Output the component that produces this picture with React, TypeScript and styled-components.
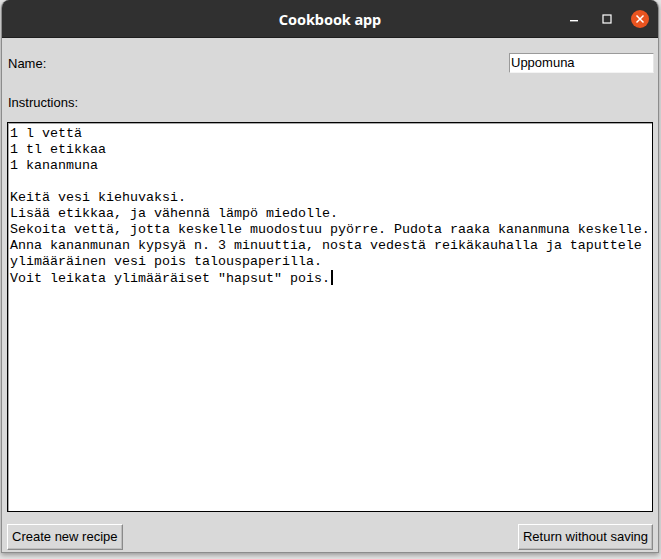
import React from "react";
import styled, { createGlobalStyle } from "styled-components";

const GlobalStyle = createGlobalStyle`
  html, body { margin: 0; padding: 0; }
  body {
    background: #e4e4e4;
    width: 661px;
    height: 559px;
    overflow: hidden;
  }
  * { box-sizing: border-box; }
`;

const Screen = styled.div`
  width: 661px;
  height: 559px;
  padding: 0 2px 0 1px;
  background: #e4e4e4;
`;

const Window = styled.div`
  width: 658px;
  height: 553px;
  display: flex;
  flex-direction: column;
  border-radius: 8px 8px 0 0;
  overflow: hidden;
  box-shadow: 0 2px 5px rgba(0, 0, 0, 0.35);
  border: 1px solid #8c8c8c;
  border-top: none;
`;

const TitleBar = styled.div`
  height: 38px;
  flex: none;
  background: #303030;
  display: flex;
  align-items: center;
  justify-content: center;
  position: relative;
  border-bottom: 1px solid #1e1e1e;
`;

const Title = styled.div`
  color: #ffffff;
  font-family: "Noto Sans", "DejaVu Sans", sans-serif;
  font-weight: 700;
  font-size: 14.5px;
  letter-spacing: -0.1px;
`;

const Controls = styled.div`
  position: absolute;
  right: 9px;
  top: 0;
  height: 38px;
  display: flex;
  align-items: center;
  gap: 15px;
`;

const CtrlBtn = styled.div<{ $close?: boolean }>`
  width: 18px;
  height: 18px;
  border-radius: 50%;
  display: flex;
  align-items: center;
  justify-content: center;
  background: ${(p) => (p.$close ? "#e95420" : "transparent")};
`;

const Body = styled.div`
  flex: 1;
  background: #d9d9d9;
  display: flex;
  flex-direction: column;
  padding: 0 4px 0 5px;
`;

const Row = styled.div<{ $h: number; $top?: boolean }>`
  height: ${(p) => p.$h}px;
  display: flex;
  align-items: ${(p) => (p.$top ? "flex-start" : "center")};
  padding-top: ${(p) => (p.$top ? "7px" : "0")};
  justify-content: space-between;
  flex: none;
`;

const Label = styled.span`
  font-family: "Liberation Sans", Arial, sans-serif;
  font-size: 13px;
  color: #000;
  padding-left: 1px;
`;

const Entry = styled.div`
  width: 145px;
  height: 20px;
  background: #ffffff;
  border-top: 1px solid #9a9a9a;
  border-left: 1px solid #9a9a9a;
  border-right: 1px solid #e6e6e6;
  border-bottom: 1px solid #f4f4f4;
  font-family: "Liberation Sans", Arial, sans-serif;
  font-size: 13px;
  color: #000;
  padding-left: 1px;
  line-height: 18px;
`;

const TextArea = styled.div`
  height: 390px;
  flex: none;
  margin-right: 1px;
  background: #ffffff;
  border: 1px solid #000;
  box-shadow: inset 1px 1px 0 #a8a8a8;
  padding: 3px 2px 2px;
  font-family: "Liberation Mono", "Courier New", monospace;
  font-size: 13.33px;
  line-height: 16px;
  color: #000;
  white-space: pre;
  overflow: hidden;
`;

const Cursor = styled.span`
  display: inline-block;
  width: 2px;
  height: 15px;
  background: #000;
  vertical-align: -3px;
  margin-left: 1px;
`;

const ButtonRow = styled.div`
  flex: 1;
  display: flex;
  align-items: center;
  justify-content: space-between;
  padding-top: 9px;
  padding-right: 1px;
`;

const Button = styled.button`
  height: 26px;
  padding: 0 4px;
  background: #d9d9d9;
  border: 1px solid;
  border-color: #ffffff #8a8a8a #8a8a8a #ffffff;
  box-shadow: inset -1px -1px 0 #bdbdbd;
  font-family: "Liberation Sans", Arial, sans-serif;
  font-size: 13px;
  color: #000;
  margin: 0;
  cursor: default;
`;

const text = `1 l vettä
1 tl etikkaa
1 kananmuna

Keitä vesi kiehuvaksi.
Lisää etikkaa, ja vähennä lämpö miedolle.
Sekoita vettä, jotta keskelle muodostuu pyörre. Pudota raaka kananmuna keskelle.
Anna kananmunan kypsyä n. 3 minuuttia, nosta vedestä reikäkauhalla ja taputtele
ylimääräinen vesi pois talouspaperilla.
Voit leikata ylimääräiset "hapsut" pois.`;

export default function App() {
  return (
    <>
      <GlobalStyle />
      <Screen>
        <Window>
          <TitleBar>
            <Title>Cookbook app</Title>
            <Controls>
              <CtrlBtn>
                <svg width="10" height="10" viewBox="0 0 10 10">
                  <rect x="1" y="6" width="8" height="1.4" fill="#fff" />
                </svg>
              </CtrlBtn>
              <CtrlBtn>
                <svg width="10" height="10" viewBox="0 0 10 10">
                  <rect x="1" y="1" width="8" height="8" fill="none" stroke="#fff" strokeWidth="1.2" />
                </svg>
              </CtrlBtn>
              <CtrlBtn $close>
                <svg width="10" height="10" viewBox="0 0 10 10">
                  <path d="M1.5 1.5 L8.5 8.5 M8.5 1.5 L1.5 8.5" stroke="#fff" strokeWidth="1.5" />
                </svg>
              </CtrlBtn>
            </Controls>
          </TitleBar>
          <Body>
            <Row $h={50}>
              <Label>Name:</Label>
              <Entry>Uppomuna</Entry>
            </Row>
            <Row $h={34} $top>
              <Label>Instructions:</Label>
            </Row>
            <TextArea>
              {text}
              <Cursor />
            </TextArea>
            <ButtonRow>
              <Button>Create new recipe</Button>
              <Button>Return without saving</Button>
            </ButtonRow>
          </Body>
        </Window>
      </Screen>
    </>
  );
}
